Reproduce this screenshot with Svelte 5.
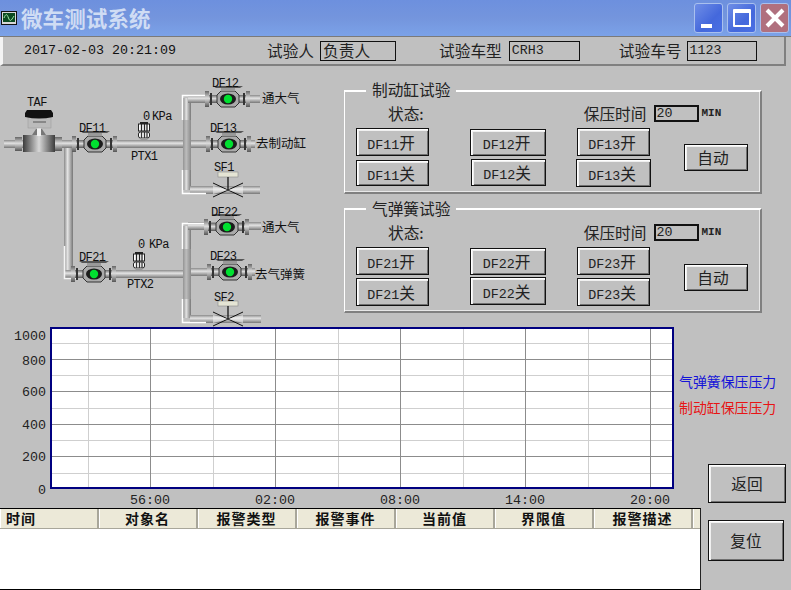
<script>
  const headerCols = [
    { t: '时间', left: true }, { t: '对象名' }, { t: '报警类型' }, { t: '报警事件' },
    { t: '当前值' }, { t: '界限值' }, { t: '报警描述' }
  ];
  const groups = [
    {
      title: '制动缸试验', time: '20', autoTop: 55, autoLeft: 33,
      cols: [
        { left: 11, btn: [{ n: 'DF11', s: '开', w: 73, h: 28, top: 0 }, { n: 'DF11', s: '关', w: 73, h: 26, top: 4 }] },
        { left: 41, btn: [{ n: 'DF12', s: '开', w: 76, h: 27, top: 1 }, { n: 'DF12', s: '关', w: 75, h: 27, top: 3, off: 1 }] },
        { left: 30, btn: [{ n: 'DF13', s: '开', w: 73, h: 28, top: 0, off: 1 }, { n: 'DF13', s: '关', w: 75, h: 28, top: 3 }] }
      ]
    },
    {
      title: '气弹簧试验', time: '20', autoTop: 56, autoLeft: 34,
      cols: [
        { left: 11, btn: [{ n: 'DF21', s: '开', w: 73, h: 28, top: 0 }, { n: 'DF21', s: '关', w: 73, h: 28, top: 3 }] },
        { left: 41, btn: [{ n: 'DF22', s: '开', w: 76, h: 27, top: 1 }, { n: 'DF22', s: '关', w: 76, h: 28, top: 2 }] },
        { left: 31, btn: [{ n: 'DF23', s: '开', w: 73, h: 28, top: 0 }, { n: 'DF23', s: '关', w: 73, h: 28, top: 3 }] }
      ]
    }
  ];
  const majorV = [150, 275, 400, 525, 650];
  const minorV = [88, 213, 338, 463, 588];
  const majorH = [359, 391, 424, 456];
  const minorH = [343, 375, 408, 440, 473];
  const yLabels = [['1000', 340], ['800', 365], ['600', 396], ['400', 429], ['200', 461], ['0', 494]];
  const xLabels = [['56:00', 150], ['02:00', 275], ['08:00', 400], ['14:00', 525], ['20:00', 650]];
  const valves = [
    { n: 'DF11', x: 95, y: 144, lx: 79, ly: 132 },
    { n: 'DF12', x: 228, y: 99, lx: 212, ly: 87 },
    { n: 'DF13', x: 229, y: 144, lx: 210, ly: 132 },
    { n: 'DF21', x: 94, y: 274, lx: 79, ly: 261 },
    { n: 'DF22', x: 227, y: 227, lx: 211, ly: 216 },
    { n: 'DF23', x: 230, y: 272, lx: 210, ly: 260 }
  ];
  const gates = [
    { n: 'SF1', x: 228, y: 187, ly: 171 },
    { n: 'SF2', x: 228, y: 316, ly: 301 }
  ];
  const sensors = [{ x: 144, y: 122 }, { x: 139, y: 252 }];
</script>

<div class="screen">
  <header class="title">
    <svg class="appicon" width="16" height="16" viewBox="0 0 16 16">
      <rect x="0.5" y="1.5" width="15" height="13" fill="#d8d8d8" stroke="#111"/>
      <rect x="2" y="3" width="12" height="9" fill="#0a4a20"/>
      <path d="M3 8 C5 3 6 4 7.5 8 S10 11 13 6" fill="none" stroke="#9fe8a8"/>
    </svg>
    <h1>微车测试系统</h1>
    <div class="winbtns">
      <div class="wb"><span class="minbar"></span></div>
      <div class="wb"><span class="maxbox"></span></div>
      <div class="wb close">
        <svg width="22" height="22" viewBox="0 0 22 22"><path d="M3 3 L19 19 M19 3 L3 19" stroke="#fff" stroke-width="4"/></svg>
      </div>
    </div>
  </header>

  <div class="infobar">
    <span class="clock">2017-02-03 20:21:09</span>
    <span class="lab l1">试验人</span><span class="val v1">负责人</span>
    <span class="lab l2">试验车型</span><span class="val v2">CRH3</span>
    <span class="lab l3">试验车号</span><span class="val v3">1123</span>
  </div>

  <main class="upper">
    <svg class="diagram" width="344" height="261" viewBox="0 66 344 261">
      <defs>
        <linearGradient id="pv" x1="0" y1="0" x2="0" y2="1">
          <stop offset="0" stop-color="#8a8a8a"/><stop offset=".4" stop-color="#e4e4e4"/><stop offset="1" stop-color="#777"/>
        </linearGradient>
        <linearGradient id="ph" x1="0" y1="0" x2="1" y2="0">
          <stop offset="0" stop-color="#8a8a8a"/><stop offset=".4" stop-color="#e4e4e4"/><stop offset="1" stop-color="#777"/>
        </linearGradient>
        <linearGradient id="bh" x1="0" y1="0" x2="1" y2="0">
          <stop offset="0" stop-color="#3c3c3c"/><stop offset=".5" stop-color="#d8d8d8"/><stop offset="1" stop-color="#3c3c3c"/>
        </linearGradient>
        <linearGradient id="fl" x1="0" y1="0" x2="0" y2="1">
          <stop offset="0" stop-color="#666"/><stop offset=".45" stop-color="#ddd"/><stop offset="1" stop-color="#555"/>
        </linearGradient>
        <g id="valve">
          <rect x="-19" y="-4" width="38" height="8" fill="url(#fl)"/>
          <rect x="-23" y="-8" width="4" height="16" fill="url(#fl)"/>
          <rect x="18" y="-8" width="4" height="16" fill="url(#fl)"/>
          <rect x="-18" y="-6" width="2" height="12" fill="#333"/>
          <rect x="15" y="-6" width="2" height="12" fill="#333"/>
          <path d="M-11 -4 L-7 -8 H7 L11 -4 V4 L7 8 H-7 L-11 4 Z" fill="#aaa" stroke="#333"/>
          <ellipse cx="0" cy="0" rx="8" ry="5.5" fill="#1c1c1c"/>
          <circle cx="0" cy="0" r="4.2" fill="#00e030"/>
          <rect x="-7" y="-11" width="14" height="3" fill="#999"/>
          <path d="M-15 -13 H15 L12 -11 H-12 Z" fill="#555"/>
        </g>
        <g id="gate">
          <rect x="-10" y="-15" width="20" height="5" fill="#e4e4d4" stroke="#888" stroke-width=".6"/>
          <path d="M0 -10 V3" stroke="#222" stroke-width="1.4"/>
          <path d="M-15 -4 L0 3 L15 -4 M-15 10 L0 3 L15 10" fill="none" stroke="#111" stroke-width="1"/>
          <path d="M-15 -1 L0 3 L-15 7 Z M15 -1 L0 3 L15 7 Z" fill="#f2f2f2" opacity=".55"/>
        </g>
        <g id="sensor">
          <rect x="-4" y="0" width="8" height="2" fill="#222"/>
          <rect x="-5.5" y="2" width="11" height="7" fill="#fff" stroke="#222"/>
          <path d="M-2.5 2 V9 M0.5 2 V9 M3 2 V9" stroke="#222" stroke-width="1.3"/>
          <rect x="-5.5" y="10" width="11" height="6" rx="2" fill="#fff" stroke="#222"/>
          <path d="M-2.5 10 V16 M0.5 10 V16 M3 10 V16" stroke="#333" stroke-width="1.3"/>
          <rect x="-3.5" y="16" width="7" height="3" fill="#999"/>
        </g>
      </defs>

      <!-- branch from TAF down to DF21 -->
      <rect x="64" y="146" width="9" height="124" fill="url(#ph)"/>
      <path d="M65 270 H80 V278 H65 Z" fill="url(#pv)"/>
      <path d="M64.5 246 V278.5 H78" fill="none" stroke="#f4f4f4" stroke-width="1.5"/>

      <!-- main horizontal pipes -->
      <rect x="4" y="140" width="180" height="8" fill="url(#pv)"/>
      <rect x="190" y="140" width="65" height="8" fill="url(#pv)"/>
      <rect x="80" y="270" width="104" height="8" fill="url(#pv)"/>
      <rect x="190" y="268" width="65" height="8" fill="url(#pv)"/>

      <!-- upper riser -->
      <rect x="183" y="98" width="8" height="92" fill="url(#ph)"/>
      <rect x="183" y="120" width="8" height="50" fill="#9c9c9c" opacity=".55"/>
      <rect x="188" y="95" width="72" height="8" fill="url(#pv)"/>
      <rect x="190" y="186" width="70" height="8" fill="url(#pv)"/>
      <path d="M182.5 170 V193.5 H206" fill="none" stroke="#fff" stroke-width="1.5"/>
      <path d="M182.5 120 V95.5 H206" fill="none" stroke="#fff" stroke-width="1.5"/>

      <!-- lower riser -->
      <rect x="183" y="226" width="8" height="92" fill="url(#ph)"/>
      <rect x="183" y="249" width="8" height="50" fill="#9c9c9c" opacity=".55"/>
      <rect x="188" y="222" width="73" height="8" fill="url(#pv)"/>
      <rect x="190" y="315" width="71" height="8" fill="url(#pv)"/>
      <path d="M182.5 299 V322.5 H206" fill="none" stroke="#fff" stroke-width="1.5"/>
      <path d="M182.5 249 V223.5 H206" fill="none" stroke="#fff" stroke-width="1.5"/>

      <!-- TAF -->
      <rect x="15" y="137" width="7" height="14" fill="url(#fl)"/>
      <rect x="55" y="137" width="7" height="14" fill="url(#fl)"/>
      <rect x="23" y="135" width="32" height="17" fill="url(#bh)"/>
      <path d="M32 135 L36 129 H42 L46 135 Z" fill="#777"/>
      <rect x="37" y="127" width="4" height="9" fill="#f0f0f0"/>
      <rect x="28" y="117" width="23" height="11" fill="#bbb" stroke="#999" stroke-width=".5"/>
      <rect x="33" y="121" width="13" height="2" fill="#888"/>
      <path d="M27 110 H51 L53 113 V117 Q39 120 25 117 V113 Z" fill="#111"/>
      <text class="svgt" x="27" y="106">TAF</text>

      {#each valves as v}
        <use href="#valve" x={v.x} y={v.y}/>
        <text class="svgt" x={v.lx} y={v.ly}>{v.n}</text>
      {/each}
      {#each gates as g}
        <use href="#gate" x={g.x} y={g.y}/>
        <text class="svgt" x={g.x - 14} y={g.ly}>{g.n}</text>
      {/each}
      {#each sensors as s}
        <use href="#sensor" x={s.x} y={s.y}/>
      {/each}

      <text class="svgt" x="143" y="120">0</text>
      <text class="svgt" x="152" y="120">KPa</text>
      <text class="svgt" x="131" y="160">PTX1</text>
      <text class="svgt" x="138" y="248">0</text>
      <text class="svgt" x="149" y="248">KPa</text>
      <text class="svgt" x="127" y="288">PTX2</text>

      <text class="svgc" x="262" y="103">通大气</text>
      <text class="svgc" x="256" y="148">去制动缸</text>
      <text class="svgc" x="262" y="232">通大气</text>
      <text class="svgc" x="255" y="279">去气弹簧</text>
    </svg>

    <div class="panels">
      {#each groups as g}
        <section class="group">
          <span class="legend">{g.title}</span>
          <div class="statusrow">
            <span class="status">状态:</span>
            <span class="hold">保压时间</span>
            <span class="timebox">{g.time}</span>
            <span class="min">MIN</span>
          </div>
          <div class="buttons">
            {#each g.cols as c}
              <div class="btncol" style="margin-left:{c.left}px">
                {#each c.btn as b}
                  <button class="btn sw" style="width:{b.w}px;height:{b.h}px;margin-top:{b.top}px;margin-left:{b.off || 0}px">{b.n}<span class="cjk">{b.s}</span></button>
                {/each}
              </div>
            {/each}
            <button class="btn auto" style="margin-top:{g.autoTop - 39}px;margin-left:{g.autoLeft}px"><span class="cjk">自动</span></button>
          </div>
        </section>
      {/each}
    </div>
  </main>

  <div class="lower">
    <div class="leftcol">
      <svg class="chart" width="701" height="181" viewBox="0 327 701 181">
        <rect x="51" y="328" width="622" height="160" fill="#fff"/>
        {#each minorH as y}<line x1="52" x2="672" y1={y + .5} y2={y + .5} stroke="#cfcfcf"/>{/each}
        {#each minorV as x}<line y1="329" y2="487" x1={x + .5} x2={x + .5} stroke="#cfcfcf"/>{/each}
        {#each majorH as y}<line x1="52" x2="672" y1={y + .5} y2={y + .5} stroke="#8c8c8c"/>{/each}
        {#each majorV as x}<line y1="329" y2="487" x1={x + .5} x2={x + .5} stroke="#8c8c8c"/>{/each}
        <rect x="51" y="328" width="622" height="160" fill="none" stroke="#000080" stroke-width="2"/>
        {#each yLabels as [t, y]}<text class="axis" x="46" y={y} text-anchor="end">{t}</text>{/each}
        {#each xLabels as [t, x]}<text class="axis" x={x} y="504" text-anchor="middle">{t}</text>{/each}
      </svg>
      <div class="alarm">
        <div class="thead">
          {#each headerCols as c}
            <div class="th" class:left={c.left}>{c.t}</div>
          {/each}
          <div class="th filler"></div>
        </div>
      </div>
    </div>
    <aside class="side">
      <div class="lg blue">气弹簧保压压力</div>
      <div class="lg red">制动缸保压压力</div>
      <button class="btn big first">返回</button>
      <button class="btn big second">复位</button>
    </aside>
  </div>
</div>

<style>
  :global(body) { margin: 0; background: #c0c0c0; }
  .screen {
    width: 791px; height: 590px; overflow: hidden; background: #c0c0c0;
    font-family: "Liberation Mono", "Noto Sans CJK SC", monospace;
    font-size: 13.33px; color: #111; display: flex; flex-direction: column;
  }
  .title {
    height: 37px; box-sizing: border-box; flex: none; display: flex; align-items: center;
    background: linear-gradient(#6d90de 0, #7495dd 50%, #7ba2e8 100%);
    border-bottom: 1px solid #7a7a7a;
  }
  .appicon { margin-left: 1px; margin-right: 4px; flex: none; }
  h1 {
    margin: 0; font: 700 21.5px "Noto Sans CJK SC", sans-serif; color: #cfdcf4;
    letter-spacing: .1px; line-height: 36px;
  }
  .winbtns { margin-left: auto; display: flex; gap: 4px; padding-right: 2px; }
  .wb {
    width: 29px; height: 30px; box-sizing: border-box; border: 1px solid #a9c0ee; border-radius: 3px;
    background: linear-gradient(135deg, #6f8ee6, #4468dc 60%, #4a70e4);
    display: flex; align-items: center; justify-content: center; position: relative;
  }
  .close { background: #b0707e; }
  .minbar { width: 11px; height: 4px; background: #fff; position: absolute; left: 6px; bottom: 4px; }
  .maxbox { box-sizing: border-box; width: 18px; height: 18px; border: 2px solid #fff; border-top-width: 4px; border-radius: 1px; }

  .infobar {
    height: 29px; flex: none; box-sizing: border-box; display: flex; align-items: center;
    margin-right: 5px; border-bottom: 2px solid #808080; border-right: 2px solid #808080;
    border-left: 3px solid #f4f4f4; background: #c0c0c0; font-size: 13.33px;
  }
  .clock { margin-left: 21px; width: 151px; flex: none; white-space: nowrap; }
  .lab { font: 15.7px "Noto Sans CJK SC", sans-serif; white-space: nowrap; flex: none; color: #222; }
  .l1 { margin-left: 92px; }
  .l2 { margin-left: 43px; }
  .l3 { margin-left: 39px; }
  .val {
    box-sizing: border-box; height: 20px; border: 1px solid #111; padding-left: 2px; flex: none;
    display: flex; align-items: center; margin-left: 5px; color: #222;
  }
  .v1 { width: 76px; margin-left: 6px; font: 15.7px "Noto Sans CJK SC", sans-serif; }
  .v2 { width: 71px; margin-left: 7px; }
  .v3 { width: 70px; }

  .upper { display: flex; height: 261px; flex: none; }
  .diagram { flex: none; display: block; }
  .svgt { font: 12px "Liberation Mono", monospace; letter-spacing: -0.6px; fill: #111; }
  .svgc { font: 12.5px "Noto Sans CJK SC", sans-serif; fill: #111; }
  .panels { display: flex; flex-direction: column; gap: 14px; padding-top: 24px; }
  .group {
    width: 418px; height: 104px; box-sizing: border-box; position: relative; flex: none;
    border: 1px solid #808080; border-top-color: #fff; border-left-color: #fff;
    box-shadow: inset -1px -1px 0 #e8e8e8;
    border-width: 2px 2px 2px 1px;
  }
  .group + .group { height: 105px; }
  .legend {
    position: absolute; left: 21px; top: -11px; padding: 0 6px; background: #c0c0c0;
    font: 15.7px/18px "Noto Sans CJK SC", sans-serif; white-space: nowrap; color: #222;
  }
  .group + .group .legend { top: -10px; }
  .statusrow { display: flex; align-items: center; height: 20px; margin-top: 11px; font: 15.7px "Noto Sans CJK SC", sans-serif; color: #222; }
  .group + .group .statusrow { margin-top: 12px; }
  .status { margin-left: 43px; }
  .hold { margin-left: 160px; }
  .timebox {
    box-sizing: border-box; width: 45px; height: 17px; margin-left: 7px; border: 2px solid #111;
    font: 13.33px/13px "Liberation Mono", monospace; padding-left: 1px; color: #222;
  }
  .min { margin-left: 3px; font: 700 11px "Liberation Mono", monospace; }
  .buttons { display: flex; align-items: flex-start; margin-top: 5px; }
  .btncol { display: flex; flex-direction: column; align-items: flex-start; }
  .btn {
    box-sizing: border-box; padding: 0; background: #c0c0c0; border: 1px solid #111;
    box-shadow: inset 1px 1px 0 #fff, inset 2px 2px 0 #f0f0f0, inset -1px -1px 0 #707070;
    font: 13.33px "Liberation Mono", "Noto Sans CJK SC", monospace; color: #222; flex: none; white-space: nowrap;
  }
  .sw { padding-right: 3px; }
  .cjk { font: 15.7px "Noto Sans CJK SC", sans-serif; }
  .auto { width: 64px; height: 27px; padding-right: 6px; }
  .big { width: 78px; height: 39px; }

  .lower { display: flex; flex: 1; min-height: 0; }
  .leftcol { width: 701px; flex: none; display: flex; flex-direction: column; }
  .chart { display: block; flex: none; }
  .axis { font: 13.33px "Liberation Mono", monospace; fill: #222; }
  .alarm {
    flex: 1; background: #fff; box-sizing: border-box;
    border-top: 1px solid #000; border-right: 1px solid #222; border-bottom: 1px solid #000;
  }
  .thead { display: flex; height: 20px; background: #ece9d8; }
  .th {
    width: 99px; box-sizing: border-box; flex: none; text-align: center;
    font: 700 14px/19px "Noto Sans CJK SC", sans-serif; letter-spacing: 1px; color: #111;
    border-right: 2px solid #a8a69a; box-shadow: inset 1px 0 0 #fff; border-bottom: 1px solid #a8a69a;
  }
  .th.left { text-align: left; padding-left: 6px; width: 99px; }
  .th.filler { flex: 1; border-right: 0; }

  .side { flex: 1; display: flex; flex-direction: column; align-items: flex-start; }
  .lg { font: 13.9px/20px "Noto Sans CJK SC", sans-serif; white-space: nowrap; margin-left: -22px; }
  .blue { color: #1414d8; margin-top: 44px; }
  .red { color: #e81414; margin-top: 6px; }
  .side .btn { font: 15.7px "Noto Sans CJK SC", sans-serif; margin-left: 7px; }
  .first { margin-top: 47px; }
  .second { margin-top: 17px; width: 76px; height: 41px; }
</style>
